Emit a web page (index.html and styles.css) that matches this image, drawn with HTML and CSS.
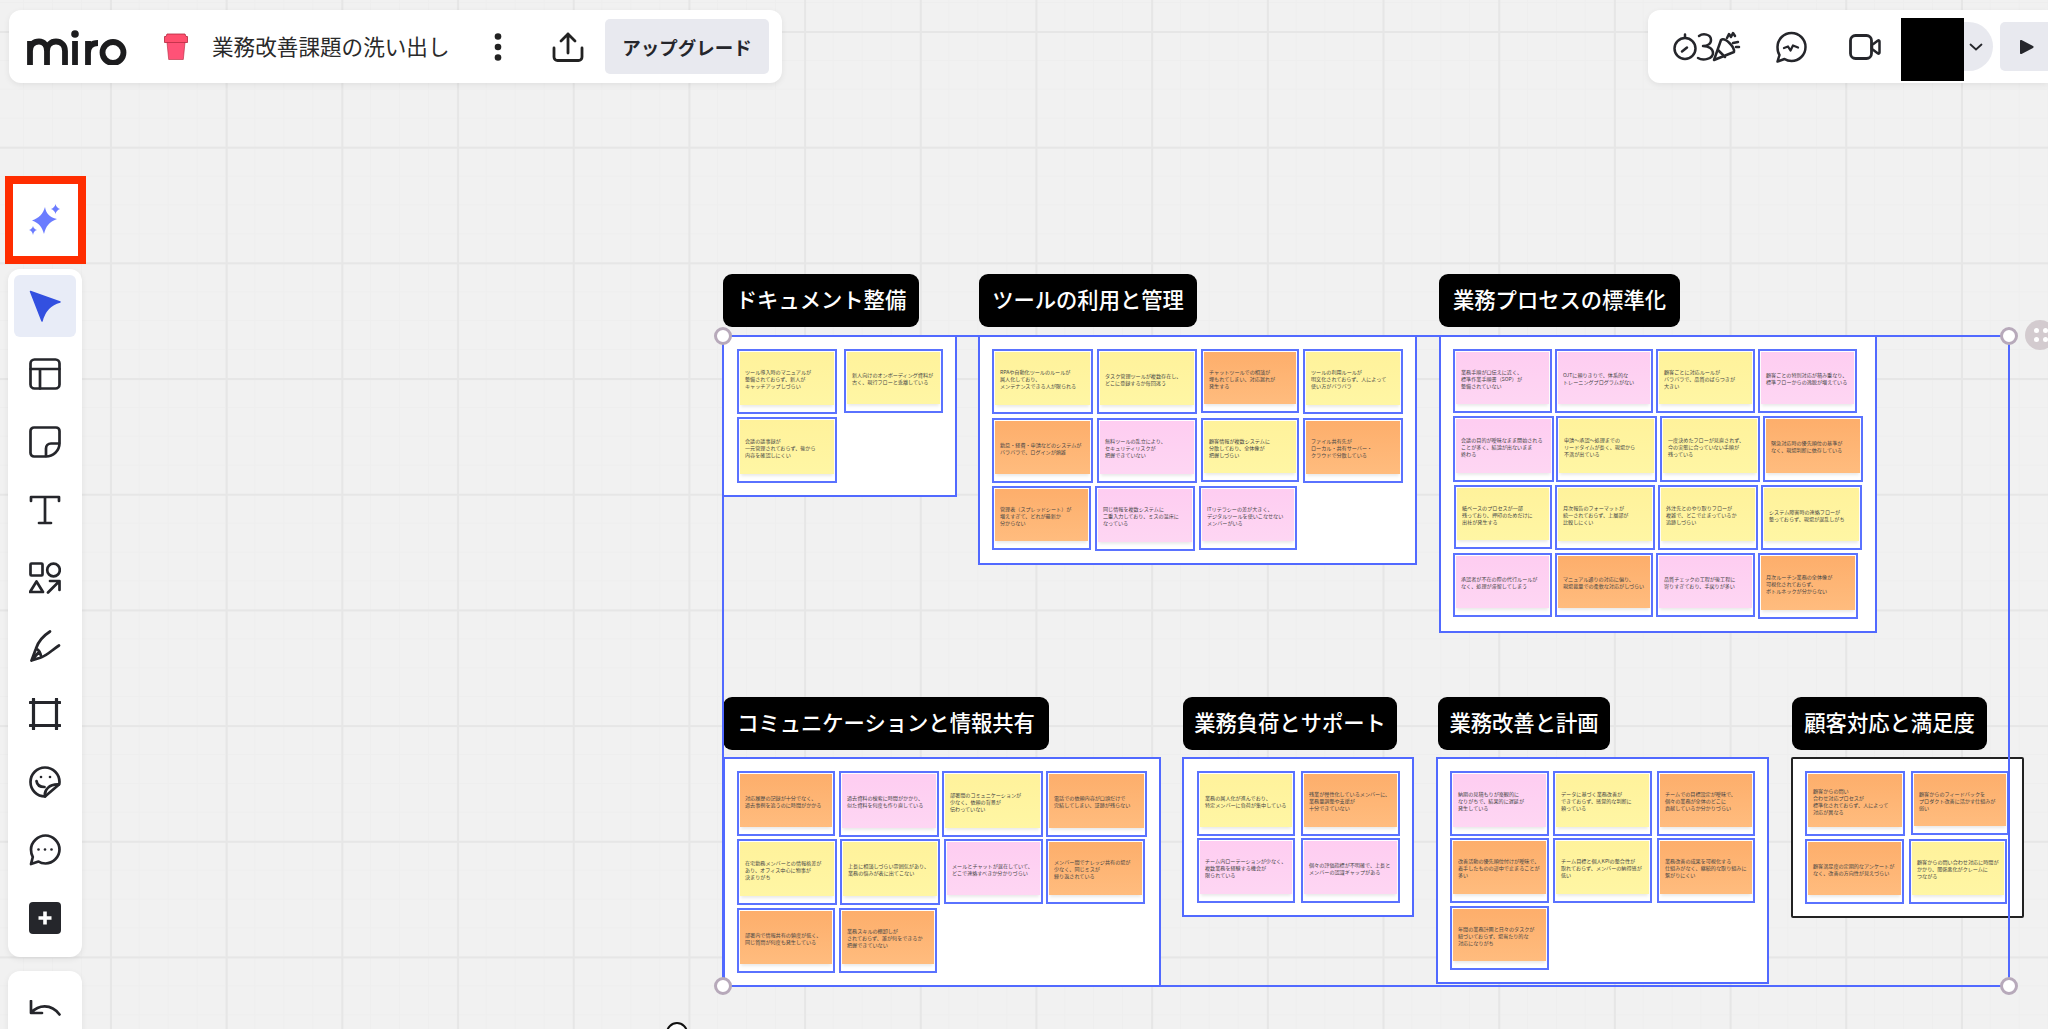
FILE: index.html
```html
<!DOCTYPE html>
<html lang="ja">
<head>
<meta charset="utf-8">
<title>業務改善課題の洗い出し</title>
<link rel="stylesheet" href="styles.css">
</head>
<body>
<main class="board">
  <section class="canvas">
    <div class="frame" style="left:722px;top:335px;width:235px;height:162px"></div>
    <div class="frame" style="left:978px;top:335px;width:439px;height:230px"></div>
    <div class="frame" style="left:1439px;top:335px;width:438px;height:298px"></div>
    <div class="frame" style="left:723px;top:757px;width:438px;height:230px"></div>
    <div class="frame" style="left:1182px;top:757px;width:232px;height:160px"></div>
    <div class="frame" style="left:1436px;top:757px;width:333px;height:227px"></div>
    <div class="frame frame-dark" style="left:1791px;top:757px;width:233px;height:161px"></div>

    <h2 class="label" style="left:723px;top:274px;width:196px">ドキュメント整備</h2>
    <h2 class="label" style="left:979px;top:274px;width:218px">ツールの利用と管理</h2>
    <h2 class="label" style="left:1439px;top:274px;width:241px">業務プロセスの標準化</h2>
    <h2 class="label" style="left:723px;top:697px;width:326px">コミュニケーションと情報共有</h2>
    <h2 class="label" style="left:1183px;top:697px;width:214px">業務負荷とサポート</h2>
    <h2 class="label" style="left:1438px;top:697px;width:172px">業務改善と計画</h2>
    <h2 class="label" style="left:1792px;top:697px;width:195px">顧客対応と満足度</h2>

    <div class="note y" style="left:737px;top:349px;width:100px;height:65px"><p>ツール導入時のマニュアルが<br>整備されておらず、新人が<br>キャッチアップしづらい</p></div>
    <div class="note y" style="left:844px;top:349px;width:99px;height:64px"><p>新人向けのオンボーディング資料が<br>古く、現行フローと乖離している</p></div>
    <div class="note y" style="left:737px;top:417px;width:100px;height:66px"><p>会議の議事録が<br>一元管理されておらず、後から<br>内容を確認しにくい</p></div>

    <div class="note y" style="left:992px;top:349px;width:101px;height:65px"><p>RPAや自動化ツールのルールが<br>属人化しており、<br>メンテナンスできる人が限られる</p></div>
    <div class="note y" style="left:1097px;top:349px;width:100px;height:65px"><p>タスク管理ツールが複数存在し、<br>どこに登録するか毎回迷う</p></div>
    <div class="note o" style="left:1201px;top:349px;width:98px;height:64px"><p>チャットツールでの相談が<br>埋もれてしまい、対応漏れが<br>発生する</p></div>
    <div class="note y" style="left:1303px;top:349px;width:100px;height:65px"><p>ツールの利用ルールが<br>明文化されておらず、人によって<br>使い方がバラバラ</p></div>
    <div class="note o" style="left:992px;top:418px;width:101px;height:65px"><p>勤怠・経費・申請などのシステムが<br>バラバラで、ログインが煩雑</p></div>
    <div class="note p" style="left:1097px;top:418px;width:100px;height:65px"><p>無料ツールの乱立により、<br>セキュリティリスクが<br>把握できていない</p></div>
    <div class="note y" style="left:1201px;top:418px;width:98px;height:64px"><p>顧客情報が複数システムに<br>分散しており、全体像が<br>把握しづらい</p></div>
    <div class="note o" style="left:1303px;top:418px;width:100px;height:65px"><p>ファイル共有先が<br>ローカル・共有サーバー・<br>クラウドで分散している</p></div>
    <div class="note o" style="left:992px;top:486px;width:99px;height:64px"><p>管理表（スプレッドシート）が<br>増えすぎて、どれが最新か<br>分からない</p></div>
    <div class="note p" style="left:1095px;top:486px;width:100px;height:65px"><p>同じ情報を複数システムに<br>二重入力しており、ミスの温床に<br>なっている</p></div>
    <div class="note p" style="left:1199px;top:486px;width:98px;height:64px"><p>ITリテラシーの差が大きく、<br>デジタルツールを使いこなせない<br>メンバーがいる</p></div>

    <div class="note p" style="left:1453px;top:349px;width:99px;height:64px"><p>業務手順が口伝えに近く、<br>標準作業手順書（SOP）が<br>整備されていない</p></div>
    <div class="note p" style="left:1555px;top:349px;width:98px;height:64px"><p>OJTに頼りきりで、体系的な<br>トレーニングプログラムがない</p></div>
    <div class="note y" style="left:1656px;top:349px;width:99px;height:64px"><p>顧客ごとに対応ルールが<br>バラバラで、品質のばらつきが<br>大きい</p></div>
    <div class="note p" style="left:1758px;top:349px;width:99px;height:64px"><p>顧客ごとの特別対応が積み重なり、<br>標準フローからの逸脱が増えている</p></div>
    <div class="note p" style="left:1453px;top:416px;width:101px;height:66px"><p>会議の目的が曖昧なまま開始される<br>ことが多く、結論が出ないまま<br>終わる</p></div>
    <div class="note y" style="left:1556px;top:416px;width:101px;height:66px"><p>申請〜承認〜処理までの<br>リードタイムが長く、現場から<br>不満が出ている</p></div>
    <div class="note y" style="left:1660px;top:416px;width:100px;height:66px"><p>一度決めたフローが見直されず、<br>今の実態に合っていない手順が<br>残っている</p></div>
    <div class="note o" style="left:1763px;top:416px;width:100px;height:66px"><p>緊急対応時の優先順位の基準が<br>なく、現場判断に依存している</p></div>
    <div class="note y" style="left:1454px;top:485px;width:98px;height:64px"><p>紙ベースのプロセスが一部<br>残っており、押印のためだけに<br>出社が発生する</p></div>
    <div class="note y" style="left:1555px;top:485px;width:100px;height:65px"><p>月次報告のフォーマットが<br>統一されておらず、上層部が<br>比較しにくい</p></div>
    <div class="note y" style="left:1658px;top:485px;width:100px;height:65px"><p>外注先とのやり取りフローが<br>複雑で、どこで止まっているか<br>追跡しづらい</p></div>
    <div class="note y" style="left:1761px;top:485px;width:101px;height:65px"><p>システム障害時の連絡フローが<br>整っておらず、現場が混乱しがち</p></div>
    <div class="note p" style="left:1453px;top:553px;width:99px;height:64px"><p>承認者が不在の際の代行ルールが<br>なく、処理が滞留してしまう</p></div>
    <div class="note o" style="left:1555px;top:553px;width:98px;height:64px"><p>マニュアル通りの対応に偏り、<br>現場裁量での柔軟な対応がしづらい</p></div>
    <div class="note p" style="left:1656px;top:553px;width:99px;height:64px"><p>品質チェックの工程が後工程に<br>寄りすぎており、手戻りが多い</p></div>
    <div class="note o" style="left:1758px;top:553px;width:100px;height:66px"><p>月次ルーチン業務の全体像が<br>可視化されておらず、<br>ボトルネックが分からない</p></div>

    <div class="note o" style="left:737px;top:771px;width:98px;height:65px"><p>対応履歴の記録が十分でなく、<br>過去事例を追うのに時間がかかる</p></div>
    <div class="note p" style="left:839px;top:771px;width:100px;height:66px"><p>過去資料の検索に時間がかかり、<br>似た資料を何度も作り直している</p></div>
    <div class="note y" style="left:942px;top:771px;width:101px;height:66px"><p>部署間のコミュニケーションが<br>少なく、依頼の背景が<br>伝わっていない</p></div>
    <div class="note o" style="left:1046px;top:771px;width:101px;height:66px"><p>電話での依頼内容が口頭だけで<br>完結してしまい、証跡が残らない</p></div>
    <div class="note y" style="left:737px;top:839px;width:100px;height:66px"><p>在宅勤務メンバーとの情報格差が<br>あり、オフィス中心に物事が<br>決まりがち</p></div>
    <div class="note y" style="left:840px;top:839px;width:100px;height:66px"><p>上長に相談しづらい雰囲気があり、<br>業務の悩みが表に出てこない</p></div>
    <div class="note p" style="left:944px;top:839px;width:99px;height:65px"><p>メールとチャットが混在していて、<br>どこで連絡すべきか分かりづらい</p></div>
    <div class="note o" style="left:1046px;top:839px;width:99px;height:65px"><p>メンバー間でナレッジ共有の場が<br>少なく、同じミスが<br>繰り返されている</p></div>
    <div class="note o" style="left:737px;top:908px;width:98px;height:65px"><p>部署内で情報共有の頻度が低く、<br>同じ質問が何度も発生している</p></div>
    <div class="note o" style="left:839px;top:908px;width:98px;height:65px"><p>業務スキルの棚卸しが<br>されておらず、誰が何をできるか<br>把握できていない</p></div>

    <div class="note y" style="left:1197px;top:771px;width:98px;height:65px"><p>業務の属人化が進んでおり、<br>特定メンバーに負荷が集中している</p></div>
    <div class="note o" style="left:1301px;top:771px;width:99px;height:65px"><p>残業が慢性化しているメンバーに、<br>業務量調整や支援が<br>十分できていない</p></div>
    <div class="note p" style="left:1197px;top:838px;width:98px;height:65px"><p>チーム内ローテーションが少なく、<br>複数業務を経験する機会が<br>限られている</p></div>
    <div class="note p" style="left:1301px;top:838px;width:99px;height:65px"><p>個々の評価指標が不明確で、上長と<br>メンバーの認識ギャップがある</p></div>

    <div class="note p" style="left:1450px;top:771px;width:99px;height:65px"><p>納期の見積もりが楽観的に<br>なりがちで、結果的に遅延が<br>発生している</p></div>
    <div class="note y" style="left:1553px;top:771px;width:99px;height:65px"><p>データに基づく業務改善が<br>できておらず、感覚的な判断に<br>頼っている</p></div>
    <div class="note o" style="left:1657px;top:771px;width:98px;height:65px"><p>チームでの目標設定が曖昧で、<br>個々の業務が全体のどこに<br>貢献しているか分かりづらい</p></div>
    <div class="note o" style="left:1450px;top:838px;width:99px;height:65px"><p>改善活動の優先順位付けが曖昧で、<br>着手したものの途中で止まることが<br>多い</p></div>
    <div class="note y" style="left:1553px;top:838px;width:99px;height:65px"><p>チーム目標と個人KPIの整合性が<br>取れておらず、メンバーの納得感が<br>低い</p></div>
    <div class="note o" style="left:1657px;top:838px;width:98px;height:65px"><p>業務改善の成果を可視化する<br>仕組みがなく、継続的な取り組みに<br>繋がりにくい</p></div>
    <div class="note o" style="left:1450px;top:906px;width:99px;height:64px"><p>年間の業務計画と日々のタスクが<br>紐づいておらず、場当たり的な<br>対応になりがち</p></div>

    <div class="note o" style="left:1805px;top:771px;width:100px;height:65px"><p>顧客からの問い<br>合わせ対応プロセスが<br>標準化されておらず、人によって<br>対応が異なる</p></div>
    <div class="note o" style="left:1911px;top:771px;width:98px;height:64px"><p>顧客からのフィードバックを<br>プロダクト改善に活かす仕組みが<br>弱い</p></div>
    <div class="note o" style="left:1805px;top:839px;width:99px;height:65px"><p>顧客満足度の定期的なアンケートが<br>なく、改善の方向性が見えづらい</p></div>
    <div class="note y" style="left:1909px;top:839px;width:98px;height:65px"><p>顧客からの問い合わせ対応に時間が<br>かかり、関係悪化がクレームに<br>つながる</p></div>

    <div class="selection"></div>
    <span class="handle handle-tl"></span>
    <span class="handle handle-tr"></span>
    <span class="handle handle-bl"></span>
    <span class="handle handle-br"></span>
    <span class="grip"><i></i><i></i><i></i><i></i></span>
    <span class="pointer"></span>
  </section>

  <header class="topbar">
    <svg class="logo" viewBox="0 0 100 35" aria-label="miro">
      <g fill="none" stroke="#1c1c1e" stroke-width="5.8">
        <path d="M3 35V11M3 21C3 14 7 11.500 12 11.500C17 11.500 20 15 20 21V35M20 21C20 15 24 11.500 29 11.500C34 11.500 38 15 38 21V35"/>
        <path d="M48 11V35"/>
        <path d="M61 35V11M61 23C61 16 65 13 71 13"/>
        <circle cx="86" cy="22.500" r="10.500"/>
      </g>
      <circle cx="48" cy="4" r="3.800" fill="#1c1c1e"/>
    </svg>
    <svg class="cup" viewBox="0 0 24 27">
      <path d="M3 1h18l1 2.500h1.500v6H.5v-6H2z" fill="#ff4f6e" stroke="#b3263c" stroke-width=".8"/>
      <path d="M3 9.500h18l-1.700 17H4.700z" fill="#ff5277" stroke="#b3263c" stroke-width=".6"/>
    </svg>
    <h1 class="title">業務改善課題の洗い出し</h1>
    <svg class="dots" viewBox="0 0 8 28"><circle cx="4" cy="3.500" r="3.300"/><circle cx="4" cy="14" r="3.300"/><circle cx="4" cy="24.500" r="3.300"/></svg>
    <svg class="share" viewBox="0 0 32 30">
      <path d="M2 16v9a3.500 3.500 0 0 0 3.500 3.500h21A3.500 3.500 0 0 0 30 25v-9M16 21V2M9 9l7-7 7 7" fill="none" stroke="#222" stroke-width="2.800" stroke-linecap="round" stroke-linejoin="round"/>
    </svg>
    <button class="upgrade">アップグレード</button>
  </header>

  <nav class="rightbar">
    <svg class="reactions" viewBox="0 0 68 32">
      <g fill="none" stroke="#25262b" stroke-width="2.500" stroke-linecap="round" stroke-linejoin="round">
        <circle cx="12" cy="17.500" r="10.500"/>
        <path d="M12 3.500v3M9 20.500l5-4"/>
        <path d="M26 5C30 2 38 3 38 9C38 13 34 15 30 15C36 15 40 18 40 22C40 28 30 30 25 27"/>
        <path d="M41 29L61 21C62 16 52 6 48 9ZM45 19L52 26"/>
        <path d="M54 7l2-4 2 3 2-4 2 3M60 12l5-1M63 16h3"/>
      </g>
    </svg>
    <svg class="chat" viewBox="0 0 32 32">
      <path d="M16.500 2C24 2 30.500 8 30.500 16C30.500 24 24 30 16.500 30C14 30 11.500 29.300 9.500 28L2.500 30.500L4.500 24C3 22 2.500 19 2.500 16C2.500 8 9 2 16.500 2Z" fill="none" stroke="#25262b" stroke-width="2.500" stroke-linejoin="round"/>
      <path d="M9 17l4-1.500 2.500 4 2.500-5 5 2" fill="none" stroke="#25262b" stroke-width="2.300" stroke-linecap="round" stroke-linejoin="round"/>
    </svg>
    <svg class="video" viewBox="0 0 32 26">
      <rect x="1.500" y="1.500" width="21" height="23" rx="5" fill="none" stroke="#25262b" stroke-width="2.800"/>
      <path d="M23 11l6-4.500a1 1 0 0 1 1.500 1v11a1 1 0 0 1-1.500 1L23 15z" fill="none" stroke="#25262b" stroke-width="2.500" stroke-linejoin="round"/>
    </svg>
    <div class="user">
      <span class="avatar"></span>
      <svg class="chevron" viewBox="0 0 14 8"><path d="M1.500 1.500L7 6.500l5.500-5" fill="none" stroke="#25262b" stroke-width="1.800" stroke-linecap="round"/></svg>
    </div>
    <button class="present"><svg viewBox="0 0 15 16"><path d="M1 2v12a1 1 0 0 0 1.500.9l11.500-6a1 1 0 0 0 0-1.800L2.500 1.100A1 1 0 0 0 1 2z" fill="#25262b"/></svg></button>
  </nav>

  <aside class="tools">
    <div class="ai-box">
      <svg class="sparkle" viewBox="0 0 32 32" fill="#6b7cff">
        <path d="M16 3C17 9 20 13 28 15C20 18 17 22 15 30C13 23 10 19 3 16.500C10 14 14 10 16 3Z"/>
        <path d="M26.500 0C27 2.500 28.500 4 31 5C28.500 6 27 7.500 26.500 10C26 7.500 24.500 6 22 5C24.500 4 26 2.500 26.500 0Z"/>
        <path d="M4 22C4.500 24 6 25.500 8 26C6 26.500 4.500 28 4 31C3.500 28 2 26.500 0 26C2 25.500 3.500 24 4 22Z"/>
      </svg>
    </div>
    <div class="toolbar">
      <button class="tool tool-active">
        <svg viewBox="0 0 32 32"><path d="M1.500 1.500L31 12Q17 15.500 13 31Z" fill="#3350e0" stroke="#3350e0" stroke-width="1.500" stroke-linejoin="round"/></svg>
      </button>
      <button class="tool"><svg class="ico" viewBox="0 0 32 32"><rect x="1.500" y="1.500" width="29" height="29" rx="4"/><path d="M1.500 11H30.500M11 11V30.500"/></svg></button>
      <button class="tool"><svg class="ico" viewBox="0 0 32 32"><path d="M5 1.500H27A3.500 3.500 0 0 1 30.500 5V17C30.500 25 24 30.500 17 30.500H5A3.500 3.500 0 0 1 1.500 27V5A3.500 3.500 0 0 1 5 1.500Z"/><path d="M30 17.500H22C19 17.500 17 19.500 17 22.500V30"/></svg></button>
      <button class="tool"><svg class="ico" viewBox="0 0 32 32"><path d="M2 7V3H30V7M16 3V29M10 29H22"/></svg></button>
      <button class="tool"><svg class="ico" viewBox="0 0 32 32"><rect x="1.500" y="1.500" width="12" height="12" rx="1"/><circle cx="24.500" cy="8" r="6.300"/><path d="M7.500 19.500L14 30H1Z"/><path d="M19 30.500L30 19.500M21 19H30.500V28"/></svg></button>
      <button class="tool"><svg class="ico" viewBox="0 0 32 32"><path d="M21 1.500C14 6 9 12 7 18.500L2.500 30.500M2.500 30.500L12 27.500C19 25 23 20 30 15.500M2.500 30.500L10 22M7 18.500C10 20 12 23 12 27.500"/></svg></button>
      <button class="tool"><svg class="ico ico-heavy" viewBox="0 0 32 32"><path d="M4.500 1V31M27.500 1V31M1 4.500H31M1 27.500H31"/></svg></button>
      <button class="tool"><svg class="ico" viewBox="0 0 32 32"><path d="M16 30.500C8 30.500 1.500 24 1.500 16C1.500 8 8 1.500 16 1.500C24 1.500 30.500 8 30.500 16C30.500 17 30.500 17.500 30 18.500L16 30.500Z"/><path d="M16 30.500C15 24 20 18 30 18.500M7.500 15C8 19 11 21 15.500 21"/><circle class="dot" cx="12" cy="11" r="1.300"/><circle class="dot" cx="21" cy="11" r="1.300"/></svg></button>
      <button class="tool"><svg class="ico" viewBox="0 0 32 32"><path d="M16.500 1.500C24 1.500 30.500 8 30.500 15.500C30.500 23 24 29.500 16.500 29.500C14 29.500 11.500 29 9.500 27.500L2 30L3.800 23C2.500 21 2 18 2 15.500C2 8 9 1.500 16.500 1.500Z"/><circle class="dot" cx="9.500" cy="15.500" r="1.300"/><circle class="dot" cx="16" cy="15.500" r="1.300"/><circle class="dot" cx="22.500" cy="15.500" r="1.300"/></svg></button>
      <button class="tool"><svg viewBox="0 0 32 32"><rect width="32" height="32" rx="4" fill="#25262b"/><path d="M16 9.500V22.500M9.500 16H22.500" stroke="#fff" stroke-width="3.600"/></svg></button>
    </div>
    <div class="undo">
      <svg class="ico" viewBox="0 0 32 24"><path d="M2 1V13H13M2.500 12.500C9 5 22 3 30.500 14.500"/></svg>
    </div>
  </aside>
</main>
</body>
</html>
```

FILE: styles.css
```css
* { box-sizing: border-box; }
html, body { margin: 0; padding: 0; }
body {
  width: 2048px;
  height: 1029px;
  overflow: hidden;
  font-family: "Noto Sans CJK JP", "Noto Sans", sans-serif;
  color: #222;
}
h1, h2, p { margin: 0; font: inherit; }
button { border: 0; padding: 0; font: inherit; color: inherit; }
svg { display: block; flex: none; }

.board {
  position: relative;
  width: 2048px;
  height: 1029px;
  overflow: hidden;
  background-color: #f1f1f1;
  background-image:
    linear-gradient(to right, #e6e6e6 2px, transparent 2px),
    linear-gradient(to bottom, #e6e6e6 2px, transparent 2px),
    linear-gradient(to right, #eeeeee 1px, transparent 1px),
    linear-gradient(to bottom, #eeeeee 1px, transparent 1px);
  background-size: 115.7px 115.7px, 115.7px 115.7px, 28.925px 28.925px, 28.925px 28.925px;
  background-position: 110px 0, 0 31px, 23px 0, 0 2px;
}

/* free canvas: frames, labels and stickies sit at their board coordinates */
.canvas { position: absolute; inset: 0; }
.frame {
  position: absolute;
  background: #fff;
  border: 2px solid #5169ff;
}
.frame-dark { border-color: #222; border-radius: 2px; }

.label {
  position: absolute;
  height: 53px;
  padding-bottom: 4px;
  display: flex;
  align-items: center;
  justify-content: center;
  background: #000;
  color: #fff;
  border-radius: 9px;
  font-size: 21.3px;
  font-weight: 500;
  white-space: nowrap;
}

.note {
  position: absolute;
  display: flex;
  align-items: center;
  background: #fff;
  border: 2px solid #5a72ff;
  padding: 1px 1px 7px 6px;
}
.note::before {
  content: "";
  position: absolute;
  inset: 1px 1px 7px;
  box-shadow: 0 3px 3px -1px rgba(0, 0, 0, .09);
}
.note p {
  position: relative;
  font-size: 5.1px;
  line-height: 7px;
  color: #454545;
  white-space: nowrap;
}
.y::before { background: linear-gradient(#fff29b, #fff6a4); }
.o::before { background: linear-gradient(#fdae6b, #ffbc7e); }
.p::before { background: linear-gradient(#fecdf1, #fed6f3); }

.selection {
  position: absolute;
  left: 722px;
  top: 335px;
  width: 1288px;
  height: 652px;
  border: 2px solid #5169ff;
}
.handle {
  position: absolute;
  width: 18px;
  height: 18px;
  background: #fff;
  border: 3px solid #b7a9ba;
  border-radius: 50%;
}
.handle-tl { left: 714px; top: 327px; }
.handle-tr { left: 2000px; top: 327px; }
.handle-bl { left: 714px; top: 977px; }
.handle-br { left: 2000px; top: 977px; }
.grip {
  position: absolute;
  left: 2025px;
  top: 320px;
  width: 30px;
  height: 30px;
  padding: 8px 9px;
  border-radius: 50%;
  background: #d3cbcf;
  display: grid;
  grid-template-columns: 5px 5px;
  gap: 4px;
}
.grip i { width: 5px; height: 5px; border-radius: 50%; background: #fff; }
.pointer {
  position: absolute;
  left: 666px;
  top: 1022px;
  width: 22px;
  height: 22px;
  background: #fff;
  border: 2px solid #111;
  border-radius: 50%;
}

/* top left bar */
.topbar {
  position: absolute;
  left: 9px;
  top: 10px;
  width: 773px;
  height: 73px;
  display: flex;
  align-items: center;
  padding: 0 13px 0 18px;
  background: #fff;
  border-radius: 12px;
  box-shadow: 0 2px 6px rgba(0, 0, 0, .07);
}
.logo { width: 100px; height: 35px; margin-top: 1px; }
.cup { width: 24px; height: 27px; margin-left: 37px; }
.title { margin-left: 24px; margin-bottom: 2px; width: 237px; font-size: 21.6px; white-space: nowrap; color: #2a2a2a; }
.dots { width: 8px; height: 28px; margin-left: 45px; fill: #222; }
.share { width: 32px; height: 30px; margin-left: 50px; }
.upgrade {
  margin-left: 21px;
  width: 164px;
  height: 55px;
  border-radius: 5px;
  background: #e8e9ef;
  font-size: 18.500px;
  font-weight: 700;
  white-space: nowrap;
  color: #25262b;
}

/* top right bar */
.rightbar {
  position: absolute;
  left: 1648px;
  top: 10px;
  right: 0;
  height: 73px;
  display: flex;
  align-items: center;
  padding-left: 25px;
  background: #fff;
  border-radius: 12px 0 0 12px;
  box-shadow: 0 2px 6px rgba(0, 0, 0, .07);
}
.reactions { width: 68px; height: 32px; }
.chat { width: 32px; height: 32px; margin-left: 34px; }
.video { width: 32px; height: 26px; margin-left: 42px; }
.user {
  position: relative;
  width: 101px;
  height: 49px;
  margin-left: 20px;
  padding-left: 68px;
  display: flex;
  align-items: center;
  background: #e8e9ef;
  border-radius: 0 25px 25px 0;
}
.avatar {
  position: absolute;
  left: 0;
  top: -4px;
  width: 63px;
  height: 63px;
  background: #000;
}
.chevron { width: 14px; height: 8px; }
.present {
  width: 60px;
  height: 49px;
  margin-left: 7px;
  padding-left: 19px;
  display: flex;
  align-items: center;
  background: #e8e9ef;
  border-radius: 5px 0 0 5px;
}
.present svg { width: 15px; height: 16px; }

/* left tools */
.tools {
  position: absolute;
  left: 0;
  top: 0;
  width: 90px;
  height: 1029px;
}
.ai-box {
  position: absolute;
  left: 5px;
  top: 176px;
  width: 81px;
  height: 88px;
  display: flex;
  align-items: center;
  justify-content: center;
  background: #fff;
  border: 8px solid #ff2d00;
  padding-right: 2px;
}
.sparkle { width: 32px; height: 32px; }
.toolbar {
  position: absolute;
  left: 8px;
  top: 269px;
  width: 74px;
  height: 688px;
  display: flex;
  flex-direction: column;
  gap: 6px;
  padding: 6px;
  background: #fff;
  border-radius: 12px;
  box-shadow: 0 2px 6px rgba(0, 0, 0, .07);
}
.tool {
  width: 62px;
  height: 62px;
  flex: none;
  display: flex;
  align-items: center;
  justify-content: center;
  background: none;
  border-radius: 6px;
}
.tool svg { width: 32px; height: 32px; }
.tool-active { background: #e8ecf7; }
.ico { fill: none; stroke: #25262b; stroke-width: 2.700; stroke-linecap: round; stroke-linejoin: round; }
.ico-heavy { stroke-width: 3.200; }
.ico .dot { fill: #25262b; stroke: none; }
.undo {
  position: absolute;
  left: 8px;
  top: 971px;
  width: 74px;
  height: 70px;
  padding: 29px 21px 0;
  background: #fff;
  border-radius: 12px;
  box-shadow: 0 2px 6px rgba(0, 0, 0, .07);
}
.undo svg { width: 32px; height: 24px; }
```
